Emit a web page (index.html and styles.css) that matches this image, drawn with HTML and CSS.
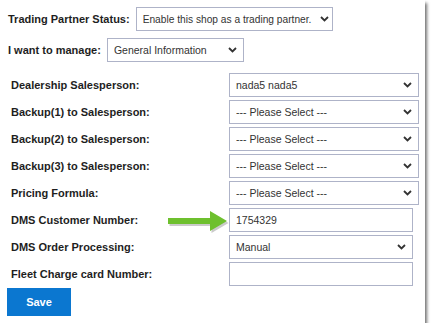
FILE: index.html
```html
<!DOCTYPE html>
<html>
<head>
    <title>Trading Partner</title>
    <link rel="stylesheet" href="styles.css">
</head>
<body>
<div class="panel">
    <div class="top-row">
        <label for="status">Trading Partner Status:</label>
        <div class="pick status">
            <select id="status"><option>Enable this shop as a trading partner.</option></select>
            <svg class="chev" width="9" height="6" viewBox="0 0 9 6"><path d="M1 1l3.5 3.5L8 1" fill="none" stroke="#333" stroke-width="1.8"/></svg>
        </div>
    </div>
    <div class="top-row">
        <label for="manage">I want to manage:</label>
        <div class="pick manage">
            <select id="manage"><option>General Information</option></select>
            <svg class="chev" width="9" height="6" viewBox="0 0 9 6"><path d="M1 1l3.5 3.5L8 1" fill="none" stroke="#333" stroke-width="1.8"/></svg>
        </div>
    </div>

    <div class="form">
        <label for="dealer">Dealership Salesperson:</label>
        <div class="pick">
            <select id="dealer"><option>nada5 nada5</option></select>
            <svg class="chev" width="9" height="6" viewBox="0 0 9 6"><path d="M1 1l3.5 3.5L8 1" fill="none" stroke="#333" stroke-width="1.8"/></svg>
        </div>

        <label for="backup1">Backup(1) to Salesperson:</label>
        <div class="pick">
            <select id="backup1"><option>--- Please Select ---</option></select>
            <svg class="chev" width="9" height="6" viewBox="0 0 9 6"><path d="M1 1l3.5 3.5L8 1" fill="none" stroke="#333" stroke-width="1.8"/></svg>
        </div>

        <label for="backup2">Backup(2) to Salesperson:</label>
        <div class="pick">
            <select id="backup2"><option>--- Please Select ---</option></select>
            <svg class="chev" width="9" height="6" viewBox="0 0 9 6"><path d="M1 1l3.5 3.5L8 1" fill="none" stroke="#333" stroke-width="1.8"/></svg>
        </div>

        <label for="backup3">Backup(3) to Salesperson:</label>
        <div class="pick">
            <select id="backup3"><option>--- Please Select ---</option></select>
            <svg class="chev" width="9" height="6" viewBox="0 0 9 6"><path d="M1 1l3.5 3.5L8 1" fill="none" stroke="#333" stroke-width="1.8"/></svg>
        </div>

        <label for="pricing">Pricing Formula:</label>
        <div class="pick">
            <select id="pricing"><option>--- Please Select ---</option></select>
            <svg class="chev" width="9" height="6" viewBox="0 0 9 6"><path d="M1 1l3.5 3.5L8 1" fill="none" stroke="#333" stroke-width="1.8"/></svg>
        </div>

        <label for="dms">DMS Customer Number:</label>
        <div class="field short">
            <svg class="arrow" width="64" height="26" viewBox="0 0 64 26">
                <path d="M3 10h42V3l17 10-17 10v-7H3z" fill="#8a8a8a" opacity="0.45" transform="translate(1.5 2)"/>
                <path d="M3 10h42V3l17 10-17 10v-7H3z" fill="#6ec02e"/>
            </svg>
            <input type="text" id="dms" value="1754329">
        </div>

        <label for="order">DMS Order Processing:</label>
        <div class="pick short">
            <select id="order"><option>Manual</option></select>
            <svg class="chev" width="9" height="6" viewBox="0 0 9 6"><path d="M1 1l3.5 3.5L8 1" fill="none" stroke="#333" stroke-width="1.8"/></svg>
        </div>

        <label for="fleet">Fleet Charge card Number:</label>
        <div class="field short">
            <input type="text" id="fleet">
        </div>
    </div>

    <button class="save">Save</button>
</div>
</body>
</html>
```

FILE: styles.css
```css
* {
    margin: 0;
    padding: 0;
    box-sizing: border-box;
}
body {
    font-family: "Liberation Sans", Arial, sans-serif;
    background-color: #fff;
    color: #222;
}
.panel {
    width: 425px;
    height: 323px;
    background-color: #fff;
    padding: 7px 0 0 7px;
    box-shadow: 2px 3px 3px rgba(0, 0, 0, 0.55);
}
label {
    font-weight: bold;
    font-size: 11px;
    color: #1e1e1e;
}
.top-row {
    display: flex;
    align-items: center;
    gap: 6px;
    height: 24px;
    margin-bottom: 7px;
}
.top-row label {
    padding-left: 1px;
}
.form {
    display: grid;
    grid-template-columns: 222px 190px;
    grid-auto-rows: 24px;
    row-gap: 3px;
    align-items: center;
    margin-top: 11px;
}
.form label {
    padding-left: 4px;
}
.pick, .field {
    position: relative;
    height: 24px;
}
.pick.status {
    width: 197px;
}
.pick.manage {
    width: 137px;
}
.short {
    width: 184px;
}
select, input[type="text"] {
    appearance: none;
    width: 100%;
    height: 100%;
    border: 1px solid #aeb3c8;
    border-radius: 0;
    background: #fff;
    font-family: "Liberation Sans", Arial, sans-serif;
    font-size: 10.5px;
    color: #333;
    padding: 0 22px 0 6px;
    outline: none;
}
.status select {
    padding: 0 12px 0 6px;
    font-size: 10.2px;
}
.status .chev {
    right: 4px;
}
input[type="text"] {
    padding: 0 6px;
}
.chev {
    position: absolute;
    right: 7px;
    top: 9px;
    pointer-events: none;
}
.arrow {
    position: absolute;
    left: -64px;
    top: 0;
}
.save {
    display: block;
    margin-top: 2px;
    width: 64px;
    height: 28px;
    border: none;
    background-color: #0b77d0;
    color: #fff;
    font-family: "Liberation Sans", Arial, sans-serif;
    font-weight: bold;
    font-size: 11px;
}
```
